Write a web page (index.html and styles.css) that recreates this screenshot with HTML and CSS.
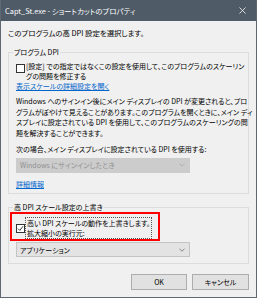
FILE: index.html
```html
<!DOCTYPE html>
<html lang="ja">
<head>
<meta charset="utf-8">
<title>Capt_St.exe - ショートカットのプロパティ</title>
<link rel="stylesheet" href="styles.css">
</head>
<body>
<div class="window">
  <div class="titlebar">
    <span class="title">Capt_St.exe - ショートカットのプロパティ</span>
    <svg class="close" width="7" height="7" viewBox="0 0 7 7"><path d="M0.5 0.5L6.5 6.5M6.5 0.5L0.5 6.5" stroke="#e6e8ea" stroke-width="0.9" fill="none"/></svg>
  </div>
  <div class="content">
    <p class="intro">このプログラムの高 DPI 設定を選択します。</p>

    <fieldset class="group first">
      <legend>プログラム DPI</legend>
      <div class="check">
        <span class="box"></span>
        <span class="label">[設定] での指定ではなくこの設定を使用して、このプログラムのスケーリン<br>グの問題を修正する</span>
      </div>
      <a class="link">表示スケールの詳細設定を開く</a>
      <p class="para">Windows へのサインイン後にメイン ディスプレイの DPI が変更されると、プロ<br>グラムがぼやけて見えることがあります。このプログラムを開くときに、メイン ディ<br>スプレイに設定されている DPI を使用して、このプログラムのスケーリングの問<br>題を解決することができます。</p>
      <p class="ask">次の場合、メイン ディスプレイに設定されている DPI を使用する:</p>
      <div class="combo disabled">
        <span>Windows にサインインしたとき</span>
        <svg width="6" height="4" viewBox="0 0 6 4"><path d="M0.5 0.8L3 3.2L5.5 0.8" stroke="#a8a8a8" stroke-width="0.8" fill="none"/></svg>
      </div>
      <a class="link more">詳細情報</a>
    </fieldset>

    <fieldset class="group second">
      <legend>高 DPI スケール設定の上書き</legend>
      <div class="mark">
        <div class="check">
          <span class="box"><svg width="7" height="7" viewBox="0 0 7 7"><path d="M1 3.6L2.8 5.4L6 1.3" stroke="#222" stroke-width="0.9" fill="none"/></svg></span>
          <span class="label focus">高い DPI スケールの動作を上書きします。<br>拡大縮小の実行元:</span>
        </div>
      </div>
      <div class="combo">
        <span>アプリケーション</span>
        <svg width="6" height="4" viewBox="0 0 6 4"><path d="M0.5 0.8L3 3.2L5.5 0.8" stroke="#707070" stroke-width="0.8" fill="none"/></svg>
      </div>
    </fieldset>

    <div class="buttons">
      <span class="button ok">OK</span>
      <span class="button">キャンセル</span>
    </div>
  </div>
</div>
</body>
</html>
```

FILE: styles.css
```css
body { margin:0; background:#fff; font-family:"Noto Sans CJK JP","Noto Sans",sans-serif; font-size:7px; font-feature-settings:"palt" 1; color:#000; }
p { margin:0; }

.window { width:257px; height:298px; box-sizing:border-box; border:1px solid #5e6973; border-top:0; background:#f0f0f0; overflow:hidden; }
.titlebar { height:21px; background:#4f5b67; color:#fff; display:flex; align-items:center; justify-content:space-between; padding:0 10px 0 4px; }
.title { font-size:7.4px; }
.close { display:block; }

.content { padding:7px 7px 0 7px; white-space:nowrap; }
.intro { line-height:10.5px; font-size:7.4px; }

.group { margin:8.5px 0 0; padding:0 6px 4.5px 7px; border:1px solid #dcdcdc; min-width:0; }
.group legend { padding:0 1px; margin-left:-3px; line-height:10.5px; }
.group.second { margin-top:8px; padding-bottom:5.5px; }

.check { display:flex; align-items:flex-start; line-height:10px; }
.first .check { margin-top:3.5px; }
.box { flex:none; width:9px; height:9px; box-sizing:border-box; border:1px solid #333; background:#fff; margin-top:3px; display:flex; align-items:center; justify-content:center; }
.label { margin-left:1px; }

.link { display:block; color:#0066cc; text-decoration:underline; line-height:10px; }
.link.more { margin-top:6px; }
.para { margin-top:5px; line-height:10.7px; }
.ask { margin-top:5.5px; line-height:10.7px; }

.combo { width:174px; height:15px; box-sizing:border-box; margin-top:2.5px; padding:0 4px 0 3px; display:flex; align-items:center; justify-content:space-between; background:#e3e3e3; border:1px solid #c4c4c4; }
.combo.disabled { background:#cccccc; border-color:#cccccc; color:#909090; }
.second .combo { margin-top:1px; }

.mark { width:150px; box-sizing:border-box; border:2px solid #ff0000; margin:-0.5px 0 0 -6px; padding:3px 0 0 4px; }
.mark .box { margin-top:7px; }
.focus { margin-left:0; border:1px dotted #555; padding:0 1px; }

.buttons { display:flex; justify-content:flex-end; gap:5px; margin-top:10px; }
.button { width:57px; height:16px; box-sizing:border-box; background:#e1e1e1; border:1px solid #adadad; display:flex; align-items:center; justify-content:center; }
.button.ok { width:56px; }
```
